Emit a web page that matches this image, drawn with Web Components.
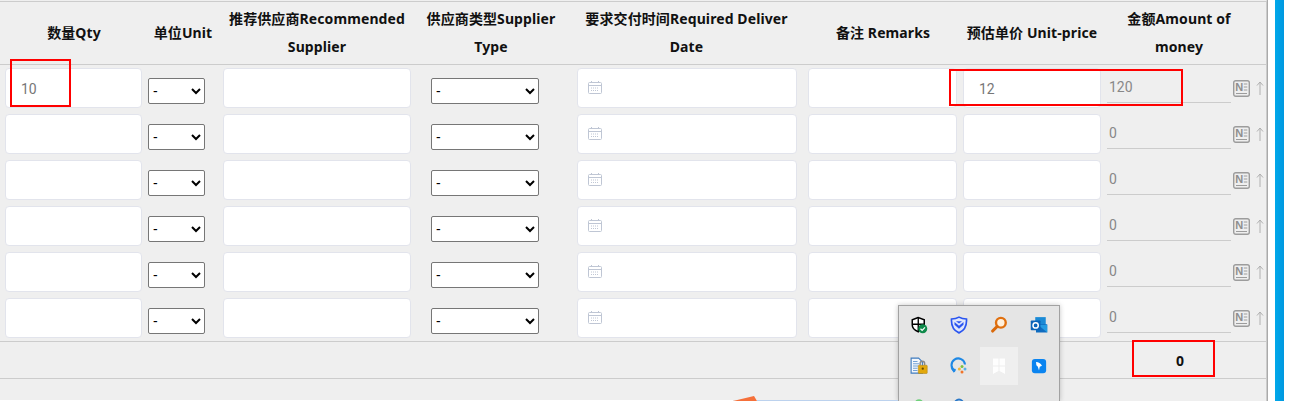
<!DOCTYPE html>
<html lang="zh">
<head>
<meta charset="utf-8">
<title>Purchase lines</title>
<style>
html, body { margin: 0; padding: 0; background: #fff; }
body { width: 1292px; height: 401px; overflow: hidden; position: relative; font-family: "Noto Sans", "Noto Sans CJK SC", sans-serif; --cols: 146px 72px 196px 152px 239px 154px 144px 150px 12px; }
</style>
</head>
<body>
<po-sheet></po-sheet>
<po-mark style="left:10px;top:59px;width:61px;height:48px"></po-mark>
<po-mark style="left:949px;top:69px;width:234px;height:37px"></po-mark>
<po-mark style="left:1132px;top:340px;width:83px;height:37px"></po-mark>
<tray-popup></tray-popup>
<arrow-peek></arrow-peek>
<script>
const headers = [
  "数量Qty",
  "单位Unit",
  "推荐供应商Recommended Supplier",
  "供应商类型Supplier Type",
  "要求交付时间Required Deliver Date",
  "备注 Remarks",
  "预估单价 Unit-price",
  "金额Amount of money",
  "",
];

const lines = [
  { qty: "10", price: "12", amount: "120" },
  { amount: "0" },
  { amount: "0" },
  { amount: "0" },
  { amount: "0" },
  { amount: "0" },
];

class PoHeader extends HTMLElement {
  connectedCallback() {
    const shadow = this.attachShadow({ mode: "open" });
    shadow.innerHTML = `<style>
:host { display: grid; grid-template-columns: var(--cols); height: 62px; border-bottom: 1px solid #ccc; }
div {
  display: flex;
  align-items: center;
  justify-content: center;
  text-align: center;
  font: bold 14px/28px "Noto Sans", "Noto Sans CJK SC", sans-serif;
  letter-spacing: .1px;
  color: #111;
  padding: 0 2px 0 4px;
}
</style>${headers.map((h) => `<div>${h}</div>`).join("")}`;
  }
}

class PoRow extends HTMLElement {
  connectedCallback() {
    const qty = this.getAttribute("qty") || "";
    const price = this.getAttribute("price") || "";
    const amount = this.getAttribute("amount") || "0";
    const shadow = this.attachShadow({ mode: "open" });
    shadow.innerHTML = `<style>
:host { display: grid; grid-template-columns: var(--cols); height: 46px; }
.cell { display: flex; height: 40px; min-width: 0; }
.box {
  box-sizing: border-box;
  height: 40px;
  background: #fff;
  border: 1px solid #e2e4ec;
  border-radius: 4px;
  padding: 2px 0 0 15px;
  font: 14px "Roboto", sans-serif;
  color: #777;
  outline: none;
}
select {
  box-sizing: border-box;
  height: 26px;
  margin-top: 10px;
  background: #fff;
  border: 1px solid #767676;
  border-radius: 2px;
  font: 14px "Liberation Sans", sans-serif;
  color: #000;
}
.date { position: relative; }
.date svg { position: absolute; left: 11px; top: 13px; }
.amount {
  box-sizing: border-box;
  width: 124px;
  height: 35px;
  margin-left: 4px;
  padding-left: 2px;
  border-bottom: 1px solid #ccc;
  font: 14px/39px "Roboto", sans-serif;
  color: #888;
}
.tools { display: flex; align-items: center; height: 40px; margin-left: -20px; gap: 6px; }
svg { display: block; flex: none; }
</style>
<div class="cell"><input class="box" style="width:137px;margin-left:5px" value="${qty}"></div>
<div class="cell"><select style="width:57px;margin-left:2px"><option>-</option></select></div>
<div class="cell"><input class="box" style="width:188px;margin-left:5px"></div>
<div class="cell"><select style="width:108px;margin-left:17px"><option>-</option></select></div>
<div class="cell date" style="margin-left:11px"><div class="box" style="width:220px"></div>
  <svg width="14" height="13" viewBox="0 0 14 13" fill="none" stroke="#bfc6d4"><rect x=".5" y="1.5" width="13" height="11" rx="1"/><path d="M.5 4.500h13M3.500 0v2M10.500 0v2"/><path d="M3 7h8M3 9.500h8" stroke-dasharray="1 1"/></svg></div>
<div class="cell"><input class="box" style="width:149px;margin-left:3px"></div>
<div class="cell"><input class="box" style="width:138px;margin-left:4px" value="${price}"></div>
<div class="cell"><div class="amount">${amount}</div></div>
<div class="cell"><div class="tools">
  <svg width="17" height="17" viewBox="0 0 17 17" fill="none"><rect x=".7" y=".7" width="15.6" height="15.6" rx="2" stroke="#9c9c9c" stroke-width="1.400"/><text x="2.300" y="11.300" font-family="Liberation Sans" font-weight="bold" font-size="11" fill="#8e8e8e">N</text><path d="M10.800 4h3.500M10.800 7h3.500M10.800 10h3.500M3 13.500h11" stroke="#9c9c9c"/></svg>
  <svg width="8" height="14" viewBox="0 0 8 14" fill="none" stroke="#b0b0b0"><path d="M4 14V1M1 4.500 4 1l3 3.500"/></svg>
</div></div>`;
  }
}

class PoSheet extends HTMLElement {
  connectedCallback() {
    const shadow = this.attachShadow({ mode: "open" });
    const rows = lines.map((l) =>
      `<po-row qty="${l.qty || ""}" price="${l.price || ""}" amount="${l.amount}"></po-row>`
    ).join("");
    shadow.innerHTML = `<style>
:host { display: flex; width: 1292px; height: 401px; }
.panel {
  box-sizing: border-box;
  width: 1267px;
  height: 401px;
  background: #efefef;
  border-top: 1px solid #efefef;
  border-right: 1px solid #ccc;
  flex: none;
}
.head { border-top: 1px solid #ccc; }
.rows { padding-top: 3px; height: 277px; box-sizing: border-box; border-bottom: 1px solid #ccc; }
.foot {
  display: flex;
  justify-content: flex-end;
  align-items: center;
  height: 36px;
  padding-right: 82px;
  border-bottom: 1px solid #ccc;
  font: bold 14px "Noto Sans", sans-serif;
  color: #111;
}
.gutter { box-sizing: border-box; width: 8px; flex: none; border-left: 1px solid #aaa; background: #fff; }
.blue { width: 9px; flex: none; background: linear-gradient(90deg, #00a8ea, #0098e0); }
</style>
<div class="panel">
  <div class="head"><po-header></po-header></div>
  <div class="rows">${rows}</div>
  <div class="foot">0</div>
</div>
<div class="gutter"></div>
<div class="blue"></div>`;
  }
}

class PoMark extends HTMLElement {
  connectedCallback() {
    const shadow = this.attachShadow({ mode: "open" });
    shadow.innerHTML = `<style>:host { position: absolute; display: block; box-sizing: border-box; border: 2px solid #f00; }</style>`;
  }
}

const trayIcons = [
  `<svg width="18" height="18" viewBox="0 0 24 24"><path d="M11 2 3 5v7c0 4 3 7 8 9l8-9V5z" fill="#fff" stroke="#000" stroke-width="2"/><path d="M11 2v19M3 11h16" stroke="#000" stroke-width="1.800"/><circle cx="17" cy="17" r="6" fill="#0f8a4b"/><path d="m14 17 2.200 2.200 3.800-4" fill="none" stroke="#fff" stroke-width="1.600"/></svg>`,
  `<svg width="18" height="18" viewBox="0 0 24 24" fill="none"><path d="M12 1.500c3 1.800 6 2.500 10 2.500.5 8-2 15-10 18.500C4 19 1.500 12 2 4c4 0 7-.7 10-2.500z" fill="#dfe6fb" stroke="#2a55f0" stroke-width="2.200"/><path d="m6 8 6 5 6-5v3.500l-6 5.500-6-5.500z" fill="#2a55f0"/><path d="M8 7h8l-4 3z" fill="#2a55f0"/></svg>`,
  `<svg width="18" height="18" viewBox="0 0 24 24" fill="none"><circle cx="14.500" cy="9" r="6.500" stroke="#e0700f" stroke-width="3.200" fill="#fff0dc"/><path d="M9.500 14 3.500 20" stroke="#d96a0c" stroke-width="4.200" stroke-linecap="round"/></svg>`,
  `<svg width="18" height="18" viewBox="0 0 24 24"><rect x="7" y="1.500" width="14" height="12" fill="#1a8ad6"/><path d="M8 11h15v11H8z" fill="#0f6cc0"/><path d="M11 12h12v10z" fill="#28a8ea" opacity=".8"/><rect x="1" y="6" width="13" height="13" rx="1" fill="#0a64b8"/><circle cx="7.500" cy="12.500" r="3.500" fill="none" stroke="#fff" stroke-width="2"/></svg>`,
  `<svg width="18" height="18" viewBox="0 0 24 24"><path d="M1.500 1.500h10l5 5v15h-15z" fill="#f4f7fb" stroke="#3f7cc0" stroke-width="1.500"/><path d="M4 6h6M4 9h8M4 12h7M4 15h6M4 18h6" stroke="#4a86c8"/><path d="M13.500 11V8.500a3 3 0 0 1 6 0V11" fill="none" stroke="#8a8a8a" stroke-width="2"/><rect x="11" y="11" width="12" height="11" rx="1" fill="#e2a80c" stroke="#a87808" stroke-width=".6"/><circle cx="17" cy="15.500" r="1.500" fill="#6b4a00"/></svg>`,
  `<svg width="18" height="18" viewBox="0 0 24 24" fill="none"><path d="M7 19A9 9 0 1 1 20 10" stroke="#1e88e5" stroke-width="2.800"/><path d="m1 15 7 1-3 5z" fill="#1e88e5"/><circle cx="16" cy="12.500" r="2" fill="#7cc242"/><circle cx="20" cy="16" r="2" fill="#5ab0e8"/><circle cx="16" cy="20" r="2" fill="#f0742a"/><circle cx="12.500" cy="16" r="2" fill="#f2b632"/></svg>`,
  `<svg width="22" height="22" viewBox="0 0 22 22" fill="#fff" opacity=".95"><path d="M5 3.500h5.500v7H5zM11.500 3.500H17v7h-5.500zM5 11.500h5.500V16L5 19zM11.500 11.500H17V19l-5.500-3z"/></svg>`,
  `<svg width="18" height="18" viewBox="0 0 24 24"><rect x="2.500" y="2.500" width="19" height="19" rx="4" fill="#0a84f0"/><path d="M8 6.500c3.500 0 6 1.500 8 5l-3 1.500-1 5-1.500-5L8.500 11z" fill="#fff"/></svg>`,
  `<svg width="18" height="18" viewBox="0 0 24 24"><circle cx="12" cy="7" r="5.500" fill="#6fd07a"/></svg>`,
  `<svg width="18" height="18" viewBox="0 0 24 24" fill="none"><circle cx="12" cy="8" r="6" stroke="#2a78c8" stroke-width="2.400"/></svg>`,
];

class TrayPopup extends HTMLElement {
  connectedCallback() {
    const shadow = this.attachShadow({ mode: "open" });
    shadow.innerHTML = `<style>
:host {
  position: absolute;
  left: 898px;
  top: 305px;
  width: 162px;
  height: 96px;
  display: block;
  box-sizing: border-box;
  background: #e5e5e5;
  border: 1px solid #a2a2a2;
  border-bottom: 0;
  box-shadow: 0 0 5px rgba(0,0,0,.22);
  overflow: hidden;
}
.grid { display: grid; grid-template-columns: repeat(4, 40px); grid-auto-rows: 38px; row-gap: 3px; }
.slot { display: flex; align-items: center; justify-content: center; }
.on { background: #efefef; margin: 0 1px; }
</style>
<div class="grid">${trayIcons.map((ic, i) => `<div class="slot${i === 6 ? " on" : ""}">${ic}</div>`).join("")}</div>`;
  }
}

class ArrowPeek extends HTMLElement {
  connectedCallback() {
    const shadow = this.attachShadow({ mode: "open" });
    shadow.innerHTML = `<style>
:host { position: absolute; left: 0; top: 393px; width: 898px; height: 8px; display: block; }
svg { display: block; }
</style>
<svg width="898" height="8" viewBox="0 0 898 8"><path d="M0 7h733v1H0z" fill="#fff"/><path d="M733 8 754 3l3 5z" fill="#f5703a"/><path d="M757 7h141v1H757z" fill="#bcd2ee"/></svg>`;
  }
}

customElements.define("po-header", PoHeader);
customElements.define("po-row", PoRow);
customElements.define("po-sheet", PoSheet);
customElements.define("po-mark", PoMark);
customElements.define("tray-popup", TrayPopup);
customElements.define("arrow-peek", ArrowPeek);
</script>
</body>
</html>
